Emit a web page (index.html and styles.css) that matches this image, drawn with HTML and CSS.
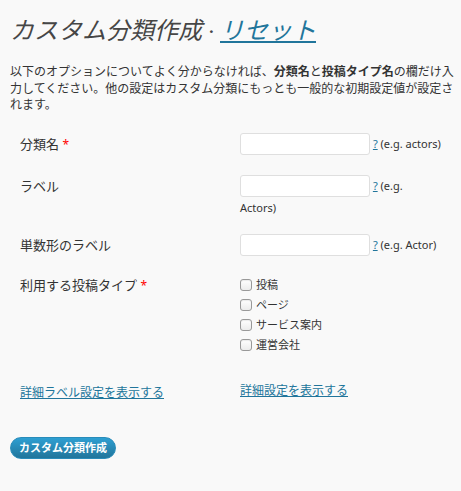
FILE: index.html
```html
<!DOCTYPE html>
<html lang="ja">
<head>
<meta charset="utf-8">
<title>カスタム分類作成</title>
<link rel="stylesheet" href="styles.css">
</head>
<body>
<div class="wrap">
  <h2 class="title">カスタム分類作成 · <a href="#" class="reset">リセット</a></h2>
  <p class="intro">以下のオプションについてよく分からなければ、<strong>分類名</strong>と<strong>投稿タイプ名</strong>の欄だけ入力してください。他の設定はカスタム分類にもっとも一般的な初期設定値が設定されます。</p>

  <div class="form">
    <div class="row">
      <div class="th">分類名 <span class="req">*</span></div>
      <div class="td"><input type="text" class="text"> <a href="#" class="help">?</a> <span class="eg">(e.g. actors)</span></div>
    </div>
    <div class="row row-wrap">
      <div class="th">ラベル</div>
      <div class="td"><input type="text" class="text"> <a href="#" class="help">?</a> <span class="eg">(e.g.<br>Actors)</span></div>
    </div>
    <div class="row">
      <div class="th">単数形のラベル</div>
      <div class="td"><input type="text" class="text"> <a href="#" class="help">?</a> <span class="eg">(e.g. Actor)</span></div>
    </div>
    <div class="row row-types">
      <div class="th">利用する投稿タイプ <span class="req">*</span></div>
      <div class="td">
        <label class="check"><input type="checkbox"> 投稿</label>
        <label class="check"><input type="checkbox"> ページ</label>
        <label class="check"><input type="checkbox"> サービス案内</label>
        <label class="check"><input type="checkbox"> 運営会社</label>
      </div>
    </div>
    <div class="row row-links">
      <div class="th th-link"><a href="#" class="more">詳細ラベル設定を表示する</a></div>
      <div class="td td-link"><a href="#" class="more">詳細設定を表示する</a></div>
    </div>
  </div>

  <button type="button" class="btn">カスタム分類作成</button>
</div>
</body>
</html>
```

FILE: styles.css
```css
html, body {
  background: #f9f9f9;
}
body {
  margin: 0;
  font-family: "Noto Sans", "Noto Sans CJK JP", sans-serif;
  color: #333;
  font-size: 12px;
}
.wrap {
  padding: 0 10px;
}
.title {
  margin: 0;
  padding-top: 17px;
  font: italic 400 24px/29px "Liberation Serif", "Noto Sans CJK JP", serif;
  color: #464646;
}
.title a {
  color: #21759b;
  text-decoration: underline;
}
.intro {
  margin: 18px 0 0;
  width: 450px;
  font-size: 12px;
  line-height: 16.5px;
}
.intro strong {
  font-weight: 700;
}
.form {
  margin-top: 19px;
}
.row {
  display: grid;
  grid-template-columns: 230px 1fr;
  margin-bottom: 19px;
}
.row-wrap {
  margin-bottom: 15px;
}
.th {
  padding-left: 10px;
  font-size: 13px;
  line-height: 22px;
}
.req {
  color: #f00;
  font-size: 12px;
}
.td {
  font-size: 11px;
  line-height: 22px;
}
.text {
  width: 130px;
  height: 22px;
  box-sizing: border-box;
  margin: 0;
  padding: 3px;
  border: 1px solid #dfdfdf;
  border-radius: 3px;
  background: #fff;
  vertical-align: top;
}
.help {
  color: #21759b;
  text-decoration: underline;
}
.row-types .th {
  line-height: 20px;
}
.check {
  display: flex;
  align-items: center;
  gap: 4px;
  height: 20px;
  font-size: 11px;
}
.check input {
  appearance: none;
  -webkit-appearance: none;
  width: 12px;
  height: 12px;
  margin: 0;
  box-sizing: border-box;
  border: 1px solid #999;
  border-radius: 3px;
  background: linear-gradient(#fff, #ececec);
  box-shadow: inset 0 1px 1px rgba(0,0,0,0.08);
}
.more {
  color: #21759b;
  text-decoration: underline;
  font-size: 12px;
  line-height: 20px;
}
.th-link {
  padding-top: 8px;
  line-height: 20px;
}
.td-link {
  padding-top: 7px;
  line-height: 20px;
}
.row-links {
  margin-bottom: 0;
}
.btn {
  display: block;
  margin: 34px 0 0;
  height: 22px;
  padding: 0 8px;
  border: 1px solid #298cba;
  border-radius: 11px;
  background: linear-gradient(#2e9fd2, #21759b);
  color: #fff;
  font: 700 11px/20px "Noto Sans", "Noto Sans CJK JP", sans-serif;
  cursor: pointer;
}
```
